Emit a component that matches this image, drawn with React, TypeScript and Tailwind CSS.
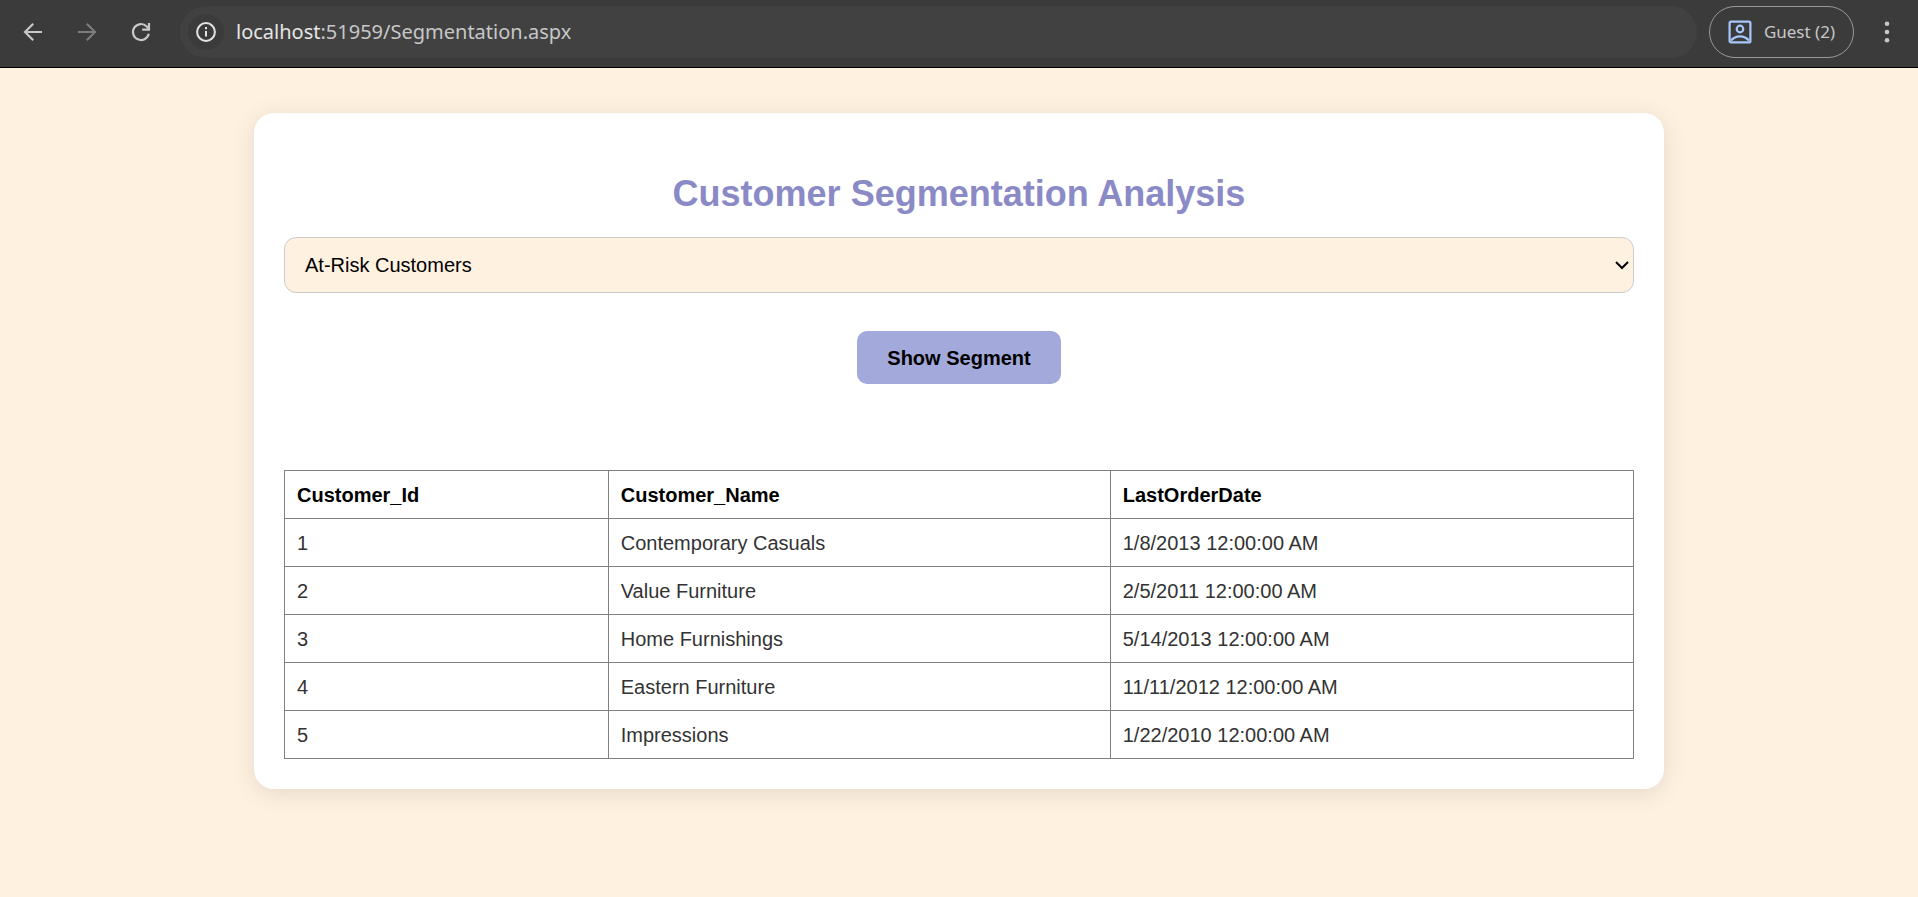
import { useState } from "react";

const customers = [
  { id: 1, name: "Contemporary Casuals", lastOrder: "1/8/2013 12:00:00 AM" },
  { id: 2, name: "Value Furniture", lastOrder: "2/5/2011 12:00:00 AM" },
  { id: 3, name: "Home Furnishings", lastOrder: "5/14/2013 12:00:00 AM" },
  { id: 4, name: "Eastern Furniture", lastOrder: "11/11/2012 12:00:00 AM" },
  { id: 5, name: "Impressions", lastOrder: "1/22/2010 12:00:00 AM" },
];

function BrowserBar() {
  return (
    <header className="flex h-17 items-center border-b border-black bg-[#3b3b3b] pb-1 pl-5 pr-[18px] font-['Noto_Sans','Open_Sans',sans-serif]">
      <nav className="flex gap-7" aria-label="Browser">
        <button type="button" aria-label="Back" className="text-[#c7c7c7]">
          <svg width="26" height="26" viewBox="0 0 26 26" fill="none" stroke="currentColor" strokeWidth="2.2">
            <path d="M22 13H5.5M13.2 4.8L5 13l8.2 8.2" />
          </svg>
        </button>
        <button type="button" aria-label="Forward" className="text-[#7c7c7c]">
          <svg width="26" height="26" viewBox="0 0 26 26" fill="none" stroke="currentColor" strokeWidth="2.2">
            <path d="M4 13h16.5M12.8 4.8L21 13l-8.2 8.2" />
          </svg>
        </button>
        <button type="button" aria-label="Reload" className="text-[#c7c7c7]">
          <svg width="26" height="26" viewBox="0 0 26 26" fill="none" stroke="currentColor" strokeWidth="2.2">
            <path d="M20.8 14.8A8 8 0 1 1 18.700 7.400L21 10.200" />
            <path d="M21 4v6.600h-6.800" />
          </svg>
        </button>
      </nav>
      <div className="ml-[26px] flex h-13 flex-1 items-center rounded-full bg-[#414141] pl-2">
        <button
          type="button"
          aria-label="Site information"
          className="flex size-9 items-center justify-center rounded-full bg-[#3b3b3b] text-[#e3e3e3]"
        >
          <svg width="20" height="20" viewBox="0 0 20 20" fill="none" stroke="currentColor" strokeWidth="2">
            <circle cx="10" cy="10" r="8.9" />
            <path d="M10 9v5.500M10 5v2.200" />
          </svg>
        </button>
        <a href="#" className="ml-3 text-xl text-[#c7c7c7]">
          <span className="text-[#e6e6e6]">localhost</span>:51959/Segmentation.aspx
        </a>
      </div>
      <button
        type="button"
        className="ml-3 flex h-13 items-center gap-3 rounded-full border border-[#999999] px-[18px] text-[17px] text-[#c7c7c7]"
      >
        <svg width="24" height="24" viewBox="0 0 24 24" fill="none" stroke="#a8c7fa" strokeWidth="2.2">
          <rect x="1.6" y="1.6" width="20.8" height="20.8" rx="1.5" />
          <circle cx="12" cy="9" r="3.3" />
          <path d="M3 20.500c2.500-3 5.500-4.200 9-4.200s6.500 1.200 9 4.200" />
        </svg>
        Guest (2)
      </button>
      <button type="button" aria-label="Menu" className="ml-5 text-[#c7c7c7]">
        <svg width="26" height="26" viewBox="0 0 26 26" fill="currentColor">
          <circle cx="13" cy="4.8" r="2.3" />
          <circle cx="13" cy="13" r="2.3" />
          <circle cx="13" cy="21.2" r="2.3" />
        </svg>
      </button>
    </header>
  );
}

export default function App() {
  const [segment, setSegment] = useState("At-Risk Customers");

  return (
    <div className="flex min-h-screen flex-col bg-[#fff1e0] font-['Liberation_Sans',Arial,sans-serif] text-xl">
      <BrowserBar />
      <main className="mx-auto mt-[45px] mb-12 w-full max-w-[1410px] rounded-[20px] bg-white px-[30px] pt-[61px] pb-[30px] shadow-[0_4px_25px_rgba(0,0,0,0.1)]">
        <h1 className="text-center text-4xl leading-10 font-bold text-[#8a8ac6]">Customer Segmentation Analysis</h1>
        <div className="relative mt-[23px]">
          <select
            aria-label="Customer segment"
            value={segment}
            onChange={(event) => setSegment(event.target.value)}
            className="block h-14 w-full appearance-none rounded-xl border border-[#cccccc] bg-[#fff1e0] px-5 text-black"
          >
            <option>At-Risk Customers</option>
          </select>
          <svg
            className="pointer-events-none absolute inset-y-0 right-1 my-auto"
            width="16"
            height="16"
            viewBox="0 0 16 16"
            fill="none"
            stroke="#000000"
            strokeWidth="2"
            aria-hidden="true"
          >
            <path d="M2 5l6 6 6-6" />
          </svg>
        </div>
        <button
          type="button"
          className="mx-auto mt-[38px] block h-[53px] rounded-[10px] bg-[#a3a9da] px-[30px] font-bold text-black"
        >
          Show Segment
        </button>
        <table className="mt-[86px] w-full table-fixed border-collapse text-left text-[#333333]">
          <colgroup>
            <col className="w-[24%]" />
            <col className="w-[502px]" />
            <col />
          </colgroup>
          <thead>
            <tr className="h-12 text-black">
              <th className="border border-[#808080] px-3">Customer_Id</th>
              <th className="border border-[#808080] px-3">Customer_Name</th>
              <th className="border border-[#808080] px-3">LastOrderDate</th>
            </tr>
          </thead>
          <tbody>
            {customers.map((customer) => (
              <tr key={customer.id} className="h-12">
                <td className="border border-[#808080] px-3">{customer.id}</td>
                <td className="border border-[#808080] px-3">{customer.name}</td>
                <td className="border border-[#808080] px-3">{customer.lastOrder}</td>
              </tr>
            ))}
          </tbody>
        </table>
      </main>
    </div>
  );
}
